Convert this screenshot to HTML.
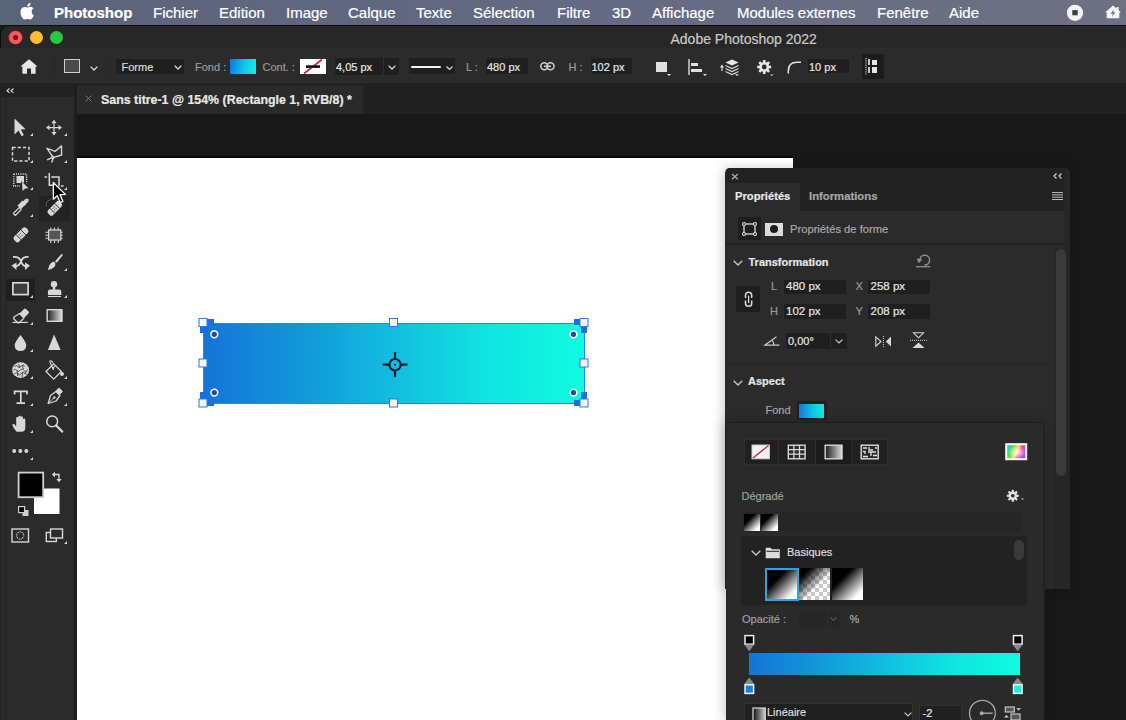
<!DOCTYPE html>
<html><head><meta charset="utf-8">
<style>
*{margin:0;padding:0;box-sizing:border-box}
html,body{width:1126px;height:720px;overflow:hidden;background:#181818;font-family:"Liberation Sans",sans-serif}
.a{position:absolute}
.t{position:absolute;line-height:1;white-space:pre;-webkit-text-stroke:0.2px currentColor}
svg{position:absolute;overflow:visible}
#menubar{left:0;top:0;width:1126px;height:25px;background:linear-gradient(90deg,#5a6479,#636a83 50%,#6e7182);color:#fff;font-size:15px}
#win{left:0;top:25px;width:1126px;height:695px;background:#181818;border-top-left-radius:9px;overflow:hidden;border-top:1px solid #0c0c0c;border-left:1px solid #0c0c0c}
#titlebar{left:0;top:0;width:1126px;height:23px;background:#272727}
#opts{left:0;top:0;width:1126px;height:0;background:none;color:#c8c8c8;font-size:11px}
#tabbar{left:0;top:83px;width:1126px;height:31px;background:#212121}
#tools{left:0;top:97px;width:76px;height:623px;background:#2b2b2b}
#canvas{left:77px;top:157px;width:716px;height:563px;background:#fff}
.inp{position:absolute;background:#1f1f1f;border:1px solid #2c2c2c}
</style></head><body>
<div id="menubar" class="a">
  <svg style="left:20px;top:3px" width="14" height="16" viewBox="0 0 14 16"><path fill="#fff" d="M11.6 8.5c0-2 1.7-3 1.8-3.1-1-1.4-2.5-1.6-3-1.6-1.3-.1-2.5.8-3.1.8-.7 0-1.7-.8-2.7-.7C3.200 3.9 1.900 4.700 1.200 6c-1.500 2.600-.4 6.400 1 8.500.7 1 1.500 2.100 2.600 2.100 1 0 1.400-.7 2.700-.7 1.200 0 1.600.7 2.700.7 1.100 0 1.800-1 2.500-2 .8-1.200 1.100-2.300 1.100-2.400-.1 0-2.200-.8-2.200-3.700zM9.600 2.500c.6-.7 1-1.700.9-2.600-.8 0-1.800.5-2.400 1.200-.5.600-1 1.600-.9 2.500.9.1 1.800-.4 2.400-1.100z"/></svg>
  <span class="t" style="left:54px;top:5px;font-weight:700">Photoshop</span>
  <span class="t" style="left:153px;top:5px">Fichier</span>
  <span class="t" style="left:219px;top:5px">Edition</span>
  <span class="t" style="left:286px;top:5px">Image</span>
  <span class="t" style="left:348px;top:5px">Calque</span>
  <span class="t" style="left:416px;top:5px">Texte</span>
  <span class="t" style="left:473px;top:5px">Sélection</span>
  <span class="t" style="left:557px;top:5px">Filtre</span>
  <span class="t" style="left:612px;top:5px">3D</span>
  <span class="t" style="left:652px;top:5px">Affichage</span>
  <span class="t" style="left:737px;top:5px">Modules externes</span>
  <span class="t" style="left:877px;top:5px">Fenêtre</span>
  <span class="t" style="left:949px;top:5px">Aide</span>
  <svg style="left:1066px;top:4px" width="18" height="18" viewBox="0 0 18 18"><circle cx="9" cy="8.8" r="8.1" fill="#f4f4f6"/><rect x="6.3" y="6.1" width="5.4" height="5.2" fill="#3b3e4a"/></svg>
  <svg style="left:1104px;top:5px" width="18" height="15" viewBox="0 0 18 15"><path d="M9 0.6 L12.6 3.6 V2 H14.6 V5.3 L17 7.4 H15.3 V13.3 H2.7 V7.4 H1 Z" fill="#f6f6f6"/><path d="M9.8 4 L6.6 8.8 H8.9 L7.9 12.2 L11.4 7.3 H9.1 Z" fill="#6e7182"/></svg>
</div>
<div id="win" class="a">
  <div id="titlebar" class="a">
    <div class="a" style="left:8px;top:5px;width:13px;height:13px;border-radius:50%;background:#f65a5e;box-shadow:0 0 0 .6px #b02a30"></div>
    <div class="a" style="left:12.2px;top:9.2px;width:4.6px;height:4.6px;border-radius:50%;background:#7a0610"></div>
    <div class="a" style="left:28.5px;top:5px;width:13px;height:13px;border-radius:50%;background:#febc2e"></div>
    <div class="a" style="left:48.5px;top:5px;width:13px;height:13px;border-radius:50%;background:#28c840"></div>
    <span class="t" style="left:669.5px;top:5.8px;font-size:14px;color:#c9c9c9">Adobe Photoshop 2022</span>
  </div>
</div>
<div class="a" style="left:0;top:48px;width:1126px;height:35px;background:#2b2b2b"></div>
<div id="opts" class="a">
  <!-- home -->
  <svg style="left:20px;top:59px" width="18" height="15" viewBox="0 0 18 15"><path d="M9 0.3 L17.6 7.6 L15.6 7.6 L15.6 14.8 L11 14.8 L11 9.4 L7 9.4 L7 14.8 L2.4 14.8 L2.4 7.6 L0.4 7.6 Z" fill="#e6e6e6"/></svg>
  <div class="a" style="left:54px;top:52px;width:1px;height:26px;background:#262626"></div>
  <div class="a" style="left:64px;top:59px;width:16px;height:14px;border:1.6px solid #cfcfcf;background:#4a4a4a"></div>
  <svg style="left:90px;top:66px" width="8" height="5" viewBox="0 0 8 5"><path d="M0.6 0.6 L4 4 L7.4 0.6" stroke="#dcdcdc" stroke-width="1.3" fill="none"/></svg>
  <div class="a" style="left:106px;top:52px;width:1px;height:26px;background:#262626"></div>
  <div class="inp" style="left:115px;top:58px;width:70px;height:17px"></div>
  <span class="t" style="left:121.5px;top:61.5px;color:#dcdcdc">Forme</span>
  <svg style="left:174px;top:65px" width="8" height="5" viewBox="0 0 8 5"><path d="M0.6 0.6 L4 4 L7.4 0.6" stroke="#dcdcdc" stroke-width="1.3" fill="none"/></svg>
  <span class="t" style="left:195px;top:61.5px;color:#9a9a9a">Fond :</span>
  <div class="a" style="left:230px;top:59px;width:26px;height:15px;background:linear-gradient(100deg,#1272e0,#10c8e8 55%,#12f2dc)"></div>
  <span class="t" style="left:262.5px;top:61.5px;color:#9a9a9a">Cont. :</span>
  <div class="a" style="left:299.5px;top:59px;width:26px;height:15px;background:#fff"></div>
  <svg style="left:299.5px;top:59px" width="26" height="15" viewBox="0 0 26 15"><path d="M4 14.5 L22 0.5" stroke="#d0204a" stroke-width="1.6"/><rect x="6" y="6.3" width="14" height="2.6" fill="#111"/></svg>
  <div class="inp" style="left:334px;top:57px;width:66px;height:19px"></div>
  <div class="a" style="left:383px;top:58px;width:1px;height:17px;background:#2e2e2e"></div>
  <span class="t" style="left:336px;top:61.5px;color:#e6e6e6">4,05 px</span>
  <svg style="left:388px;top:65px" width="8" height="5" viewBox="0 0 8 5"><path d="M0.6 0.6 L4 4 L7.4 0.6" stroke="#dcdcdc" stroke-width="1.3" fill="none"/></svg>
  <div class="inp" style="left:408px;top:57px;width:48px;height:18px"></div>
  <div class="a" style="left:411px;top:66px;width:30px;height:2.2px;background:#f2f2f2;border-radius:1px"></div>
  <svg style="left:446px;top:65.5px" width="7" height="4" viewBox="0 0 7 4"><path d="M0.5 0.5 L3.5 3.5 L6.5 0.5" stroke="#dcdcdc" stroke-width="1.2" fill="none"/></svg>
  <span class="t" style="left:466px;top:61.5px;color:#9a9a9a">L :</span>
  <div class="inp" style="left:485px;top:57px;width:44px;height:18px"></div>
  <span class="t" style="left:487px;top:61.5px;color:#e6e6e6">480 px</span>
  <svg style="left:540px;top:62px" width="15" height="9" viewBox="0 0 15 9"><rect x="0.8" y="0.8" width="7" height="7" rx="3.5" stroke="#cfcfcf" stroke-width="1.5" fill="none"/><rect x="7" y="0.8" width="7" height="7" rx="3.5" stroke="#cfcfcf" stroke-width="1.5" fill="none"/><path d="M4 4.3 H11" stroke="#cfcfcf" stroke-width="1.5"/></svg>
  <span class="t" style="left:568.5px;top:61.5px;color:#9a9a9a">H :</span>
  <div class="inp" style="left:590px;top:57px;width:43px;height:18px"></div>
  <span class="t" style="left:591.5px;top:61.5px;color:#e6e6e6">102 px</span>
  <div class="a" style="left:656px;top:62px;width:11px;height:10px;background:#e0e0e0"></div>
  <svg style="left:666.5px;top:74px" width="4" height="2" viewBox="0 0 4 2"><path d="M0 0 H4 L2 2 Z" fill="#e0e0e0"/></svg>
  <div class="a" style="left:688px;top:59px;width:1.6px;height:16px;background:#a8a8a8"></div>
  <div class="a" style="left:690.5px;top:63px;width:7px;height:3px;background:#e0e0e0"></div>
  <div class="a" style="left:690.5px;top:68.5px;width:11px;height:3.5px;background:#e0e0e0"></div>
  <svg style="left:702.5px;top:74px" width="4" height="2" viewBox="0 0 4 2"><path d="M0 0 H4 L2 2 Z" fill="#e0e0e0"/></svg>
  <!-- arrange -->
  <svg style="left:720px;top:59px" width="20" height="17" viewBox="0 0 20 17"><path d="M2 12 V7 M0.5 8.5 L2 6.5 L3.5 8.5" stroke="#e0e0e0" stroke-width="1.2" fill="none"/><path d="M12 0.5 L18.5 3.5 L12 6.5 L5.5 3.5 Z" fill="#e6e6e6"/><path d="M5.5 6.5 L12 9.5 L18.5 6.5 M5.5 9.5 L12 12.5 L18.5 9.5 M5.5 12.5 L12 15.5 L18.5 12.5" stroke="#d8d8d8" stroke-width="1.2" fill="none"/><path d="M15 15.3 H19 L17 17 Z" fill="#e0e0e0"/></svg>
  <!-- gear -->
  <svg style="left:756.6px;top:59.6px" width="17" height="16" viewBox="0 0 17 16"><g transform="translate(7.2,7)"><circle r="5" fill="#e6e6e6"/><g fill="#e6e6e6"><rect x="-1.3" y="-7" width="2.6" height="14"/><rect x="-1.3" y="-7" width="2.6" height="14" transform="rotate(45)"/><rect x="-1.3" y="-7" width="2.6" height="14" transform="rotate(90)"/><rect x="-1.3" y="-7" width="2.6" height="14" transform="rotate(135)"/></g><circle r="2.4" fill="#2b2b2b"/></g><path d="M13 14.5 H16.5 L14.75 16 Z" fill="#e0e0e0"/></svg>
  <!-- corner radius -->
  <svg style="left:787px;top:61px" width="15" height="13" viewBox="0 0 15 13"><path d="M1.3 12.5 V10 Q1.3 1.3 10 1.3 H14" stroke="#e0e0e0" stroke-width="1.6" fill="none"/></svg>
  <div class="inp" style="left:807px;top:58px;width:43px;height:16px"></div>
  <span class="t" style="left:809px;top:61.5px;color:#e6e6e6">10 px</span>
  <div class="a" style="left:862px;top:54px;width:22px;height:25px;background:#1c1c1c"></div>
  <svg style="left:862px;top:54px" width="22" height="25" viewBox="0 0 22 25"><path d="M4 4 V21" stroke="#d0d0d0" stroke-width="1.2" stroke-dasharray="1.2 1"/><rect x="6" y="5" width="2" height="6" fill="#c8c8c8"/><rect x="6" y="13" width="2" height="6" fill="#c8c8c8"/><rect x="10" y="6" width="5" height="5" fill="#e6e6e6"/><rect x="10" y="13" width="5" height="6" fill="#e6e6e6"/></svg>
</div>
<div id="tabbar" class="a"></div>
<div class="a" style="left:75px;top:86px;width:288px;height:28px;background:#2a2a2a"></div>
<svg style="left:84.5px;top:95px" width="7" height="7" viewBox="0 0 7 7"><path d="M0.5 0.5 L6.5 6.5 M6.5 0.5 L0.5 6.5" stroke="#7a7a7a" stroke-width="1"/></svg>
<span class="t" style="left:101px;top:93.5px;font-size:12.4px;font-weight:700;color:#e8e8e8">Sans titre-1 @ 154% (Rectangle 1, RVB/8) *</span>
<div id="canvas" class="a"></div>
<div class="a" style="left:77px;top:156px;width:716px;height:1.5px;background:#080808"></div>
<!-- rectangle -->
<div class="a" style="left:203px;top:322.5px;width:382px;height:81px;background:linear-gradient(90deg,#1474d8 0%,#1293d9 22%,#12bde0 50%,#10e4e2 75%,#0ffce0 100%);border:1.5px solid #2a86e8"></div>
<svg style="left:0;top:0" width="1126" height="720" viewBox="0 0 1126 720">
  <g fill="#1a6ee0">
    <rect x="207" y="319" width="7" height="6"/><rect x="200" y="326" width="6" height="7"/>
    <rect x="574" y="319" width="7" height="6"/><rect x="581" y="326" width="6" height="7"/>
    <rect x="207" y="400" width="7" height="6"/><rect x="200" y="392" width="6" height="7"/>
    <rect x="574" y="400" width="7" height="6"/><rect x="581" y="392" width="6" height="7"/>
  </g>
  <g fill="#f4f4f4" stroke="#2a7be6" stroke-width="1">
    <rect x="199" y="318.5" width="8" height="8"/><rect x="199" y="359" width="8" height="8"/><rect x="199" y="399" width="8" height="8"/>
    <rect x="389.5" y="318.5" width="8" height="8"/><rect x="389.5" y="399" width="8" height="8"/>
    <rect x="580" y="318.5" width="8" height="8"/><rect x="580" y="359" width="8" height="8"/><rect x="580" y="399" width="8" height="8"/>
  </g>
  <g fill="#1b4f9e" stroke="#f4f4f4" stroke-width="1.6">
    <circle cx="214.3" cy="334.3" r="3.4"/><circle cx="214.3" cy="392.6" r="3.4"/>
    <circle cx="573.5" cy="334.3" r="3.4"/><circle cx="573.5" cy="392.6" r="3.4"/>
  </g>
  <g stroke="#0a1e30" stroke-width="2.2" fill="none">
    <circle cx="395" cy="364.7" r="5.7"/>
    <path d="M382.5 364.7 H389.4 M400.6 364.7 H407.5 M395 352.2 V359.1 M395 370.3 V377.2"/>
  </g>
  <circle cx="395" cy="364.7" r="1" fill="#0c2438"/>
</svg>
<div id="tools" class="a"></div>
<div class="a" style="left:0;top:84px;width:76px;height:13px;background:#222"></div>
<div class="a" style="left:0;top:97px;width:1px;height:623px;background:#232323"></div>
<div class="a" style="left:5px;top:97px;width:1.5px;height:623px;background:#262626"></div>
<div class="a" style="left:74px;top:84px;width:3px;height:636px;background:#1e1e1e"></div>
<div class="a" style="left:6px;top:278.5px;width:29px;height:22px;background:#1f1f1f"></div>
<div class="a" style="left:38.5px;top:196px;width:31px;height:25px;background:#232323"></div>
<svg style="left:0;top:0" width="80" height="720" viewBox="0 0 80 720">
 <path d="M9.5 88.5 L7 90.7 L9.5 92.9 M13.5 88.5 L11 90.7 L13.5 92.9" stroke="#cfcfcf" stroke-width="1.2" fill="none"/>
 <g fill="#d8d8d8">
  <path d="M33 133 V136 H30 Z M67 133 V136 H64 Z M33 160 V163 H30 Z M67 160 V163 H64 Z M33 187 V190 H30 Z M67 187 V190 H64 Z M33 214 V217 H30 Z M67 268 V271 H64 Z M33 295 V298 H30 Z M67 295 V298 H64 Z M33 322 V325 H30 Z M33 349 V352 H30 Z M33 376 V379 H30 Z M67 376 V379 H64 Z M33 403 V406 H30 Z M67 403 V406 H64 Z M33 430 V433 H30 Z M33 457 V460 H30 Z M67 541 V544 H64 Z"/>
  <!-- move arrow -->
  <path d="M14.5 118.4 L25.6 129.3 L20.8 129.6 L23.8 135 L21.6 136.2 L18.6 130.6 L14.5 134.6 Z"/>
  <!-- move cross -->
  <path d="M54 119.8 L56.6 123.3 H51.4 Z M54 135.5 L56.6 132 H51.4 Z M46 127.6 L49.5 125 V130.2 Z M62 127.6 L58.5 125 V130.2 Z"/><path d="M53.4 122 H54.6 V133 H53.4 Z M48 127 H60 V128.2 H48 Z"/>
  <!-- object select inner -->
  <rect x="16.5" y="176" width="7.5" height="7"/>
 </g>
 <path d="M21.2 180.8 L29.5 188.6 L25.6 188.9 L22.6 192.5 Z" fill="#2b2b2b"/>
 <path d="M22 181.9 L28.6 188.2 L25.2 188.4 L22.6 191 Z" fill="#d8d8d8"/>
 <g stroke="#d8d8d8" fill="none" stroke-width="1.4">
  <path d="M13.8 174 H26.6 V183.5 M13.8 174 V186 H20" stroke-dasharray="1.1 1.1"/>
  <!-- marquee -->
  <path d="M12.5 147.5 H29 V161 H12.5 Z" stroke-dasharray="3.2 2" stroke-width="1.5"/>
  <!-- lasso -->
  <path d="M47 148.3 L55.3 151.3 L61.5 145.9 L61.6 155 L53.3 157.6 Z" stroke-width="1.4" stroke-linejoin="round"/>
  <path d="M52.3 157.6 L47 159.8 M53.3 158.2 L51.6 162.6" stroke-width="1.4"/>
  <circle cx="52.8" cy="157.4" r="1.3" stroke-width="1"/>
  <!-- crop -->
  <path d="M49.3 173 V185.3 H56 M44.5 177 H47 M51.3 177 H59 V186.5 M61 186 H63.5" stroke-width="1.5"/>
  <!-- rect tool -->
  <rect x="12.9" y="282.8" width="15.2" height="11.8" fill="#3d3d3d" stroke-width="1.7"/>
  <!-- stamp base line -->
  <path d="M48 296.5 H61" stroke-width="1.1"/>
  <!-- bucket -->
  <path d="M46 371.5 L53.7 363.8 L61.4 371.5 L53.7 379.2 Z" stroke-width="1.3"/>
  <path d="M53.5 370 L50.3 363 Q49.3 361 50.8 360.8 Q52 360.7 53 363" stroke-width="1.2"/>
  <!-- pen -->
  <path d="M48.2 403.5 L50.5 395.5 L56 391.5 L60 395.5 L56 401 Z" stroke-width="1.3" stroke-linejoin="round"/>
  <path d="M48.5 403.2 L53.5 398.2" stroke-width="0.9"/>
  <!-- zoom -->
  <circle cx="52.2" cy="421.4" r="5.4" stroke-width="1.5"/>
  <path d="M56.2 425.4 L62.2 431.6" stroke-width="2.2" stroke-linecap="round"/>
  <!-- quick mask -->
  <rect x="12" y="529" width="16.5" height="13" stroke-width="1.4"/>
  <circle cx="20.2" cy="535.5" r="3.6" stroke-dasharray="1 1" stroke-width="1.2"/>
  <rect x="46.3" y="532.5" width="10" height="9" stroke-width="1.4"/>
  <rect x="50.5" y="529" width="12" height="9" stroke-width="1.4" fill="#2b2b2b"/>
  <!-- swap -->
  <path d="M53.5 474.5 H59 V480" stroke-width="1.3"/>
  <!-- T -->
  <path d="M14.6 394.5 V391.3 H27 V394.5 M20.8 391.5 V403 M16.5 403.2 H25" stroke-width="1.7"/>
  <!-- crossing arrows -->
  <path d="M13 257 Q19.5 256.5 21 261.5 Q22.5 266 26.5 266.5 M28.5 257 Q22.5 256.5 21 261.5 Q19.5 266 15 266.5" stroke-width="1.8"/>
  <!-- eyedropper tube -->
  <path d="M13.3 213.5 L19.3 207.5 L21.3 209.5 L15.3 215.5 Z" stroke-width="1.1" stroke-linejoin="round"/>
  <!-- dotted arc healing -->
  <path d="M46.5 206 Q45.5 201 51 199.5" stroke="#9a9a9a" stroke-width="1" stroke-dasharray="1 1"/>
 </g>
 <g fill="#d8d8d8">
  <path d="M11.5 265.5 L16.5 262.5 L16.5 270 Z M30 265.5 L25 262.5 L25 270 Z"/>
  <!-- eyedropper bulb + crossbar -->
  <path d="M17.5 205.5 L22.5 200.5 L26 204 L21 209 Z"/>
  <path d="M21 203.5 L25.3 199.2 Q27 198 28.2 199.2 Q29.3 200.4 28 202 L23.8 206.3 Z"/>
  <!-- bandage left -->
  <g transform="rotate(-45 21 234.8)"><rect x="12.5" y="231.3" width="17" height="7" rx="2.5"/></g>
  <!-- bandage right (healing) -->
  <g transform="rotate(-45 54.8 208.3)"><rect x="46.5" y="204.8" width="16.6" height="7" rx="2.5"/></g>
  <!-- brush -->
  <path d="M62.2 254 Q63 254.8 62 256.2 L56.8 262.8 L55 261.2 L61 254.6 Q61.6 253.6 62.2 254 Z"/>
  <path d="M55.3 262.5 Q53.5 261 51.5 262.5 Q49.5 264.5 48.8 267 L47.9 270 Q51 269.5 53.3 267.8 Q56 265.8 55.3 262.5 Z"/>
  <!-- stamp -->
  <circle cx="54" cy="284.2" r="3.2"/><path d="M52.8 286.5 H55.2 V289.6 H59.4 Q61.3 289.6 61.3 291.5 V295 H47.9 V291.5 Q47.9 289.6 49.8 289.6 H52.8 Z"/>
  <!-- eraser light part -->
  <path d="M19.5 313.5 L24 309 Q25 308 26 309 L28.5 311.5 Q29.5 312.5 28.5 313.5 L24 318 Z"/>
  <!-- drop -->
  <path d="M20.5 334.9 Q26.2 342 26.2 345.3 Q26.2 351.1 20.5 351.1 Q14.7 351.1 14.7 345.3 Q14.7 342 20.5 334.9 Z"/>
  <!-- triangle -->
  <path d="M54.1 334.5 L60.6 350 H47.9 Z"/>
  <!-- sponge -->
  <ellipse cx="20.6" cy="370.1" rx="8.5" ry="7.8"/>
  <circle cx="62" cy="374" r="2"/>
  <path d="M53.6 369.5 L52 368 L55.5 365 Z"/>
  <!-- hand -->
  <path d="M16.6 431.8 Q13.2 428.5 12.5 425.3 Q12.2 423.6 13.8 424 Q14.8 424.3 16.2 426.6 V418.3 Q16.2 417.1 17.3 417.1 Q18.3 417.1 18.3 418.3 V416.8 Q18.3 415.8 19.5 415.8 Q20.6 415.8 20.6 416.8 V417.2 Q20.6 416.2 21.8 416.2 Q22.9 416.2 22.9 417.6 V419.8 Q22.9 418.6 24.1 418.6 Q25.3 418.6 25.3 420 V427.5 Q25.3 431.8 21.5 431.8 Z"/>
  <!-- pen cap -->
  <path d="M55.5 391 L58.5 388 Q59 387.5 59.5 388 L62.5 391 Q63 391.5 62.5 392 L59.5 395 Z"/>
  <circle cx="54.3" cy="397.5" r="1.2"/>
  <!-- dots -->
  <circle cx="14.2" cy="451" r="2"/><circle cx="20.3" cy="451" r="2"/><circle cx="26.3" cy="451" r="2"/>
  <!-- swap arrows heads -->
  <path d="M51.8 474.5 L55 471.8 V477.2 Z M59 482.3 L56.3 479 H61.7 Z"/>
 </g>
 <!-- eraser outline part -->
 <path d="M19.5 313.5 L24 318 L19.5 322.5 Q18.5 323.5 17.5 322.5 L14 319 Q13 318 14 317 Z" fill="#2b2b2b" stroke="#d8d8d8" stroke-width="1.3" stroke-linejoin="round"/>
 <path d="M12.5 322.4 H27.7" stroke="#d8d8d8" stroke-width="1.2"/>
 <!-- bandage stripes -->
 <g stroke="#2b2b2b" stroke-width="0.9">
  <g transform="rotate(-45 21 234.8)"><path d="M17.6 231 V238.6 M24.4 231 V238.6"/><path d="M19.3 233.5 h0.8 M21.3 233.5 h0.8 M19.3 236 h0.8 M21.3 236 h0.8" stroke-width="1.1"/></g>
  <g transform="rotate(-45 54.8 208.3)"><path d="M51.3 204.5 V212 M58.1 204.5 V212"/><path d="M53 207 h0.8 M55 207 h0.8 M53 209.5 h0.8 M55 209.5 h0.8" stroke-width="1.1"/></g>
 </g>
 <!-- chip -->
 <g stroke="#d8d8d8" stroke-width="1.1">
  <path d="M50.8 227.4 V243 M54.5 227.4 V243 M58.2 227.4 V243 M45.4 232.2 H62.7 M45.4 235.2 H62.7 M45.4 238.2 H62.7"/>
 </g>
 <rect x="48.6" y="230" width="12.2" height="10" fill="#555" stroke="#d8d8d8" stroke-width="1.2"/>
 <!-- gradient tool -->
 <defs><linearGradient id="gt" x1="0" y1="0" x2="1" y2="0"><stop offset="0" stop-color="#1e1e1e"/><stop offset="1" stop-color="#e0e0e0"/></linearGradient></defs>
 <rect x="47.2" y="309.7" width="14.8" height="11.6" fill="url(#gt)" stroke="#d8d8d8" stroke-width="1.4"/>
 <!-- sponge texture -->
 <g stroke="#2b2b2b" stroke-width="0.8" fill="none">
  <path d="M14.5 366.5 Q16.5 364.5 18 366.5 T21.5 366 T25 366.5 M13.5 370 Q15.5 368.5 17 370.5 T20.5 370 T24 370.5 T27.5 369.5 M14.5 373.5 Q16.5 372 18 374 T21.5 373.5 T25 374 M18.5 364 Q20 365.5 19 368 M23 365 Q22 368 24 369 M17 371 Q18.5 373 17.5 376 M22 372 Q23 374 22 377 M26 371 Q25 373 26.5 375"/>
 </g>
 <!-- colors -->
 <rect x="34" y="488.5" width="25.5" height="25.5" fill="#fff"/>
 <rect x="18.6" y="472.6" width="24.6" height="24.6" fill="#000" stroke="#cfcfcf" stroke-width="1.8"/>
 <rect x="22.5" y="510" width="6" height="6" fill="#cfcfcf"/>
 <rect x="18.6" y="506.6" width="6" height="6" fill="#000" stroke="#cfcfcf" stroke-width="1.2"/>
 <!-- mouse cursor -->
 <path d="M53.3 182.5 L53.4 199.2 L57.2 195.7 L60.2 202.6 L62.9 201.4 L60 194.6 L65.3 194.4 Z" fill="#000" stroke="#fff" stroke-width="1.3" stroke-linejoin="round"/>
</svg>
<!-- properties panel -->
<div class="a" style="left:725px;top:168px;width:345px;height:421px;background:#262626;border-radius:5px 5px 0 0;box-shadow:-2px 0 12px rgba(0,0,0,.2)"></div>
<div class="a" style="left:726px;top:168px;width:339px;height:43px;background:#222;border-radius:4px 0 0 0"></div>
<div class="a" style="left:726px;top:182.5px;width:74px;height:29px;background:#2b2b2b"></div>
<div class="a" style="left:726px;top:211px;width:339px;height:378px;background:#2b2b2b"></div>
<svg style="left:731px;top:173px" width="8" height="7" viewBox="0 0 8 7"><path d="M1 1 L6.8 6.3 M6.8 1 L1 6.3" stroke="#a8a8a8" stroke-width="1.3"/></svg>
<svg style="left:1053px;top:173px" width="10" height="6" viewBox="0 0 10 6"><path d="M3.5 0.5 L1 3 L3.5 5.5 M8.5 0.5 L6 3 L8.5 5.5" stroke="#c8c8c8" stroke-width="1.3" fill="none"/></svg>
<svg style="left:1052px;top:192px" width="11" height="9" viewBox="0 0 11 9"><path d="M0 0.6 H11 M0 2.9 H11 M0 5.2 H11 M0 7.5 H11" stroke="#bdbdbd" stroke-width="1"/></svg>
<span class="t" style="left:735px;top:190.7px;font-size:11.2px;font-weight:700;color:#e8e8e8">Propriétés</span>
<span class="t" style="left:809px;top:190.7px;font-size:11.3px;font-weight:700;color:#a6a6a6">Informations</span>
<!-- shape props row -->
<div class="a" style="left:738px;top:217px;width:23px;height:23px;background:#1e1e1e"></div>
<svg style="left:742px;top:222px" width="15" height="14" viewBox="0 0 15 14"><rect x="2" y="2" width="11" height="10" stroke="#dedede" stroke-width="1.3" fill="none"/><g fill="#1e1e1e" stroke="#dedede" stroke-width="1.1"><circle cx="2" cy="2" r="1.5"/><circle cx="13" cy="2" r="1.5"/><circle cx="2" cy="12" r="1.5"/><circle cx="13" cy="12" r="1.5"/></g></svg>
<div class="a" style="left:765px;top:222.5px;width:17.5px;height:13.5px;background:#dcdcdc"></div>
<div class="a" style="left:769.7px;top:225.2px;width:8.2px;height:8.2px;border-radius:50%;background:#1c1c1c"></div>
<span class="t" style="left:790px;top:224.2px;font-size:11.2px;color:#a8a8a8">Propriétés de forme</span>
<div class="a" style="left:726px;top:242.5px;width:339px;height:2px;background:#222"></div>
<!-- scrollbar -->
<div class="a" style="left:1054px;top:248px;width:12px;height:341px;background:#262626"></div>
<div class="a" style="left:1056px;top:249px;width:10px;height:227px;background:#3a3a3a;border-radius:5px"></div>
<!-- transformation -->
<svg style="left:733px;top:260px" width="10" height="6" viewBox="0 0 10 6"><path d="M0.7 0.7 L5 5 L9.3 0.7" stroke="#c8c8c8" stroke-width="1.3" fill="none"/></svg>
<span class="t" style="left:748.5px;top:256.8px;font-size:11px;font-weight:700;color:#e6e6e6">Transformation</span>
<svg style="left:914px;top:252px" width="18" height="17" viewBox="0 0 18 17"><path d="M10.4 13 A4.9 4.9 0 1 0 5.9 7.2" stroke="#8e8e8e" stroke-width="1.5" fill="none"/><path d="M2.6 6.6 L8.6 7.6 L4.6 11.2 Z" fill="#8e8e8e"/><path d="M1.8 14.7 H16.2" stroke="#8e8e8e" stroke-width="1.3"/></svg>
<div class="a" style="left:736px;top:286px;width:24px;height:26px;background:#1e1e1e"></div>
<svg style="left:743.5px;top:290.5px" width="10" height="17" viewBox="0 0 10 17"><path d="M1.5 6.9 V4.3 A3.1 3.1 0 0 1 7.7 4.3 V6.9 M1.5 9.6 V12.2 A3.1 3.1 0 0 0 7.7 12.2 V9.6" stroke="#d8d8d8" stroke-width="1.5" fill="none"/><path d="M4.6 4.6 V12" stroke="#d8d8d8" stroke-width="1.3"/></svg>
<span class="t" style="left:771px;top:280.5px;font-size:11px;color:#9a9a9a">L</span>
<span class="t" style="left:770px;top:305.5px;font-size:11px;color:#9a9a9a">H</span>
<span class="t" style="left:855.5px;top:280.5px;font-size:11px;color:#9a9a9a">X</span>
<span class="t" style="left:855.5px;top:305.5px;font-size:11px;color:#9a9a9a">Y</span>
<div class="inp" style="left:783px;top:278.5px;width:64px;height:16.5px"></div>
<div class="inp" style="left:783px;top:303px;width:64px;height:16.5px"></div>
<div class="inp" style="left:867px;top:278.5px;width:64px;height:16.5px"></div>
<div class="inp" style="left:867px;top:303px;width:64px;height:16.5px"></div>
<span class="t" style="left:786px;top:280.8px;font-size:11.5px;color:#e6e6e6">480 px</span>
<span class="t" style="left:786px;top:305.5px;font-size:11.5px;color:#e6e6e6">102 px</span>
<span class="t" style="left:870.5px;top:280.8px;font-size:11.5px;color:#e6e6e6">258 px</span>
<span class="t" style="left:870.5px;top:305.5px;font-size:11.5px;color:#e6e6e6">208 px</span>
<svg style="left:764px;top:336px" width="16" height="10" viewBox="0 0 16 10"><path d="M15.5 9.2 H0.8 L12.5 0.8 M10 9.2 Q10 6 8 4.5" stroke="#c8c8c8" stroke-width="1.2" fill="none"/></svg>
<div class="inp" style="left:784.5px;top:331.5px;width:63px;height:18.5px"></div>
<div class="a" style="left:830px;top:332.5px;width:1px;height:16.5px;background:#2e2e2e"></div>
<span class="t" style="left:788px;top:335.9px;font-size:11px;color:#e6e6e6">0,00°</span>
<svg style="left:835px;top:339px" width="8" height="5" viewBox="0 0 8 5"><path d="M0.6 0.6 L4 4 L7.4 0.6" stroke="#c8c8c8" stroke-width="1.2" fill="none"/></svg>
<svg style="left:875px;top:335.5px" width="17" height="11" viewBox="0 0 17 11"><path d="M0.8 0.8 L6 5.5 L0.8 10.2 Z" stroke="#d8d8d8" stroke-width="1.1" fill="none"/><path d="M16 0.5 L10.8 5.5 L16 10.5 Z" fill="#d8d8d8"/><path d="M8.4 0 V11" stroke="#d8d8d8" stroke-width="1" stroke-dasharray="1 1"/></svg>
<svg style="left:910px;top:332px" width="17" height="17" viewBox="0 0 17 17"><path d="M3.5 0.8 H13.5 L8.5 5.8 Z" stroke="#d8d8d8" stroke-width="1.1" fill="none"/><path d="M2.5 16 H14.5 L8.5 10.5 Z" fill="#d8d8d8"/><path d="M0 8.3 H17" stroke="#d8d8d8" stroke-width="1" stroke-dasharray="1 1"/></svg>
<div class="a" style="left:726px;top:363px;width:326px;height:1px;background:#252525"></div>
<!-- aspect -->
<svg style="left:733px;top:380px" width="10" height="6" viewBox="0 0 10 6"><path d="M0.7 0.7 L5 5 L9.3 0.7" stroke="#c8c8c8" stroke-width="1.3" fill="none"/></svg>
<span class="t" style="left:748px;top:375.7px;font-size:11px;font-weight:700;color:#e6e6e6">Aspect</span>
<span class="t" style="left:765.5px;top:405.2px;font-size:11px;color:#a8a8a8">Fond</span>
<div class="a" style="left:796.5px;top:400.5px;width:30px;height:19.5px;background:#1f1f1f"></div>
<div class="a" style="left:799px;top:403.5px;width:25px;height:14.5px;background:linear-gradient(100deg,#1272e0,#10c8e8 55%,#12f2dc)"></div>
<!-- gradient popup -->
<div class="a" style="left:726px;top:421.5px;width:319px;height:299px;background:#2a2a2a;border-top:1.5px solid #1f1f1f;border-right:2.5px solid #222;border-left:1px solid #262626;box-shadow:-2px 0 12px rgba(0,0,0,.2)"></div>
<div class="a" style="left:743.5px;top:439px;width:144px;height:25.5px;background:#202020;border:1px solid #2f2f2f"></div>
<div class="a" style="left:778.2px;top:440px;width:1.2px;height:24px;background:#2c2c2c"></div>
<div class="a" style="left:815px;top:440px;width:1.2px;height:24px;background:#2c2c2c"></div>
<div class="a" style="left:851px;top:440px;width:1.2px;height:24px;background:#2c2c2c"></div>
<div class="a" style="left:816.2px;top:440px;width:34.8px;height:24px;background:#1b1b1b"></div>
<svg style="left:751px;top:443.5px" width="20" height="16" viewBox="0 0 20 16"><rect x="1" y="1" width="17.4" height="13.8" fill="#f2f2f2" stroke="#d0d0d0" stroke-width="1"/><path d="M2 14 L17.5 1.5" stroke="#c81e4a" stroke-width="1.3"/></svg>
<svg style="left:787px;top:443.5px" width="20" height="16" viewBox="0 0 20 16"><rect x="1.3" y="1.2" width="16.8" height="13.6" fill="#2a2a2a" stroke="#d8d8d8" stroke-width="1.4"/><path d="M1 5.6 H18.5 M1 10.1 H18.5 M6.9 1 V15 M12.5 1 V15" stroke="#d8d8d8" stroke-width="1.3"/></svg>
<svg style="left:823.5px;top:443.5px" width="20" height="16" viewBox="0 0 20 16"><defs><linearGradient id="g3" x1="0" x2="1"><stop offset="0" stop-color="#1a1a1a"/><stop offset="1" stop-color="#dcdcdc"/></linearGradient></defs><rect x="1.2" y="1.2" width="16.8" height="13.6" fill="url(#g3)" stroke="#d8d8d8" stroke-width="1.4"/></svg>
<svg style="left:859.5px;top:443.5px" width="20" height="16" viewBox="0 0 20 16"><rect x="1.2" y="1.2" width="17" height="13.6" fill="#2a2a2a" stroke="#e0e0e0" stroke-width="1.4"/><path d="M3 4 H7 M9 3 V6 H13 M15 4 H17 M3 7.5 H5 V10 M8 8 H16 M11 8 V12 M3 12.5 H8 M13 11.5 H17" stroke="#e0e0e0" stroke-width="1.3" fill="none"/></svg>
<svg style="left:1004px;top:442px" width="25" height="20" viewBox="0 0 25 20"><defs><linearGradient id="rb" x1="0" y1="0" x2="1" y2="0.3"><stop offset="0" stop-color="#20c0ff"/><stop offset=".3" stop-color="#40e060"/><stop offset=".6" stop-color="#ffe040"/><stop offset=".8" stop-color="#ff40a0"/><stop offset="1" stop-color="#a040ff"/></linearGradient><radialGradient id="rw" cx=".55" cy=".55" r=".5"><stop offset="0" stop-color="#fff" stop-opacity=".9"/><stop offset="1" stop-color="#fff" stop-opacity="0"/></radialGradient></defs><rect x="1.2" y="1.2" width="22" height="17" fill="#fff"/><rect x="3.2" y="3.2" width="18" height="13" fill="url(#rb)"/><rect x="3.2" y="3.2" width="18" height="13" fill="url(#rw)"/></svg>
<div class="a" style="left:736px;top:474.5px;width:296px;height:1px;background:#262626"></div>
<span class="t" style="left:741.5px;top:490.8px;font-size:11px;color:#a0a0a0">Dégradé</span>
<svg style="left:1006px;top:489px" width="19" height="14" viewBox="0 0 19 14"><g transform="translate(6.8,6.8)"><circle r="4.2" fill="#e0e0e0"/><g fill="#e0e0e0"><rect x="-1.1" y="-6" width="2.2" height="12"/><rect x="-1.1" y="-6" width="2.2" height="12" transform="rotate(45)"/><rect x="-1.1" y="-6" width="2.2" height="12" transform="rotate(90)"/><rect x="-1.1" y="-6" width="2.2" height="12" transform="rotate(135)"/></g><circle r="1.8" fill="#2a2a2a"/></g><path d="M15 9.5 H18 L16.5 11 Z" fill="#d0d0d0"/></svg>
<div class="a" style="left:742.5px;top:511.5px;width:278px;height:20px;background:#262626;border-radius:2px"></div>
<div class="a" style="left:743.5px;top:514px;width:16.5px;height:16.5px;background:linear-gradient(135deg,#000 32%,#7a7a7a 56%,#fff 84%)"></div>
<div class="a" style="left:760.8px;top:514px;width:17px;height:16.5px;background:linear-gradient(135deg,#000 32%,#7a7a7a 56%,#fff 84%)"></div>
<div class="a" style="left:741px;top:536px;width:285.5px;height:69px;background:#222;border-radius:2px"></div>
<div class="a" style="left:1013.5px;top:540px;width:10px;height:20px;background:#3a3a3a;border-radius:5px"></div>
<svg style="left:750.5px;top:549.5px" width="10" height="6" viewBox="0 0 10 6"><path d="M0.7 0.7 L5 5 L9.3 0.7" stroke="#c8c8c8" stroke-width="1.3" fill="none"/></svg>
<svg style="left:764.5px;top:546.5px" width="16" height="12" viewBox="0 0 16 12"><path d="M0.7 11.3 V0.7 H5.5 L7 2.2 H14.8 V11.3 Z" fill="#dcdcdc"/><path d="M1.5 4.3 H14" stroke="#222" stroke-width="1"/></svg>
<span class="t" style="left:787px;top:546.8px;font-size:11px;color:#dcdcdc">Basiques</span>
<div class="a" style="left:765px;top:568px;width:33.5px;height:32.5px;background:linear-gradient(135deg,#000 32%,#7a7a7a 56%,#fff 84%);border:2px solid #2ba4e8"></div>
<div class="a" style="left:799.2px;top:568.2px;width:31.3px;height:31.5px;background-color:#fff;background-image:linear-gradient(45deg,#c8c8c8 25%,transparent 25%,transparent 75%,#c8c8c8 75%),linear-gradient(45deg,#c8c8c8 25%,transparent 25%,transparent 75%,#c8c8c8 75%);background-size:8px 8px;background-position:0 0,4px 4px"></div>
<div class="a" style="left:799.2px;top:568.2px;width:31.3px;height:31.5px;background:linear-gradient(135deg,#000 18%,rgba(0,0,0,0) 60%)"></div>
<div class="a" style="left:832px;top:568.2px;width:31.3px;height:31.5px;background:linear-gradient(135deg,#000 32%,#7a7a7a 56%,#fff 84%)"></div>
<span class="t" style="left:742px;top:613.9px;font-size:11px;color:#a0a0a0">Opacité :</span>
<div class="a" style="left:799px;top:611.5px;width:41px;height:15.5px;background:#262626"></div>
<div class="a" style="left:826.5px;top:611.5px;width:1px;height:15.5px;background:#2e2e2e"></div>
<svg style="left:829.5px;top:617px" width="7" height="4" viewBox="0 0 7 4"><path d="M0.5 0.5 L3.5 3.5 L6.5 0.5" stroke="#555" stroke-width="1.1" fill="none"/></svg>
<span class="t" style="left:849.5px;top:613.9px;font-size:11px;color:#a8a8a8">%</span>
<!-- stops -->
<svg style="left:740px;top:632px" width="290" height="66" viewBox="0 0 290 66">
 <rect x="5" y="3.6" width="8.6" height="8.6" fill="#000" stroke="#f0f0f0" stroke-width="1.5"/>
 <path d="M4.2 12.5 H14.2 L9.2 19.3 Z" fill="#8a8a8a"/>
 <rect x="273.5" y="3.6" width="8.6" height="8.6" fill="#000" stroke="#f0f0f0" stroke-width="1.5"/>
 <path d="M272.7 12.5 H282.7 L277.7 19.3 Z" fill="#8a8a8a"/>
 <path d="M4.2 52 H14.2 L9.2 45.6 Z" fill="#8a8a8a"/>
 <rect x="5" y="52.8" width="8.6" height="8.6" fill="#1680e0" stroke="#f0f0f0" stroke-width="1.5"/>
 <path d="M272.7 52 H282.7 L277.7 45.6 Z" fill="#8a8a8a"/>
 <rect x="273.5" y="52.8" width="8.6" height="8.6" fill="#14f2e0" stroke="#f0f0f0" stroke-width="1.5"/>
</svg>
<div class="a" style="left:748.5px;top:653.4px;width:271.5px;height:22px;background:linear-gradient(90deg,#1474d8 0%,#1293d9 22%,#12bde0 50%,#10e4e2 75%,#0ffce0 100%)"></div>
<!-- bottom row -->
<div class="a" style="left:743.5px;top:703px;width:169.5px;height:20px;background:#202020;border:1px solid #313131"></div>
<svg style="left:751.5px;top:707px" width="15" height="14" viewBox="0 0 15 14"><defs><linearGradient id="g4" x1="0" x2="1"><stop offset="0" stop-color="#111"/><stop offset="1" stop-color="#ccc"/></linearGradient></defs><rect x="1" y="1" width="12.3" height="14" fill="url(#g4)" stroke="#cfcfcf" stroke-width="1.3"/></svg>
<span class="t" style="left:767px;top:706.6px;font-size:11px;color:#dedede">Linéaire</span>
<svg style="left:903.5px;top:712px" width="8" height="5" viewBox="0 0 8 5"><path d="M0.6 0.6 L4 4 L7.4 0.6" stroke="#c8c8c8" stroke-width="1.2" fill="none"/></svg>
<div class="a" style="left:919.2px;top:704.8px;width:42.6px;height:18px;background:#202020;border:1px solid #313131"></div>
<span class="t" style="left:922.5px;top:707.7px;font-size:11px;color:#e6e6e6">-2</span>
<svg style="left:968px;top:699px" width="29" height="29" viewBox="0 0 29 29"><circle cx="14.4" cy="14.2" r="12.9" stroke="#a8a8a8" stroke-width="1.3" fill="none"/><circle cx="13.7" cy="14.2" r="2" fill="#a8a8a8"/><path d="M13.7 14.2 H24.7" stroke="#a8a8a8" stroke-width="1.4"/></svg>
<svg style="left:1003px;top:705px" width="20" height="16" viewBox="0 0 20 16"><rect x="2.3" y="2" width="9" height="5" fill="#555" stroke="#d0d0d0" stroke-width="1.1"/><rect x="8" y="9" width="9" height="6" fill="#555" stroke="#d0d0d0" stroke-width="1.1"/><path d="M13.2 3.2 H18 L15.6 5.6 Z M1 12.5 H5.8 L3.4 10 Z" fill="#d0d0d0"/></svg>
</body></html>
